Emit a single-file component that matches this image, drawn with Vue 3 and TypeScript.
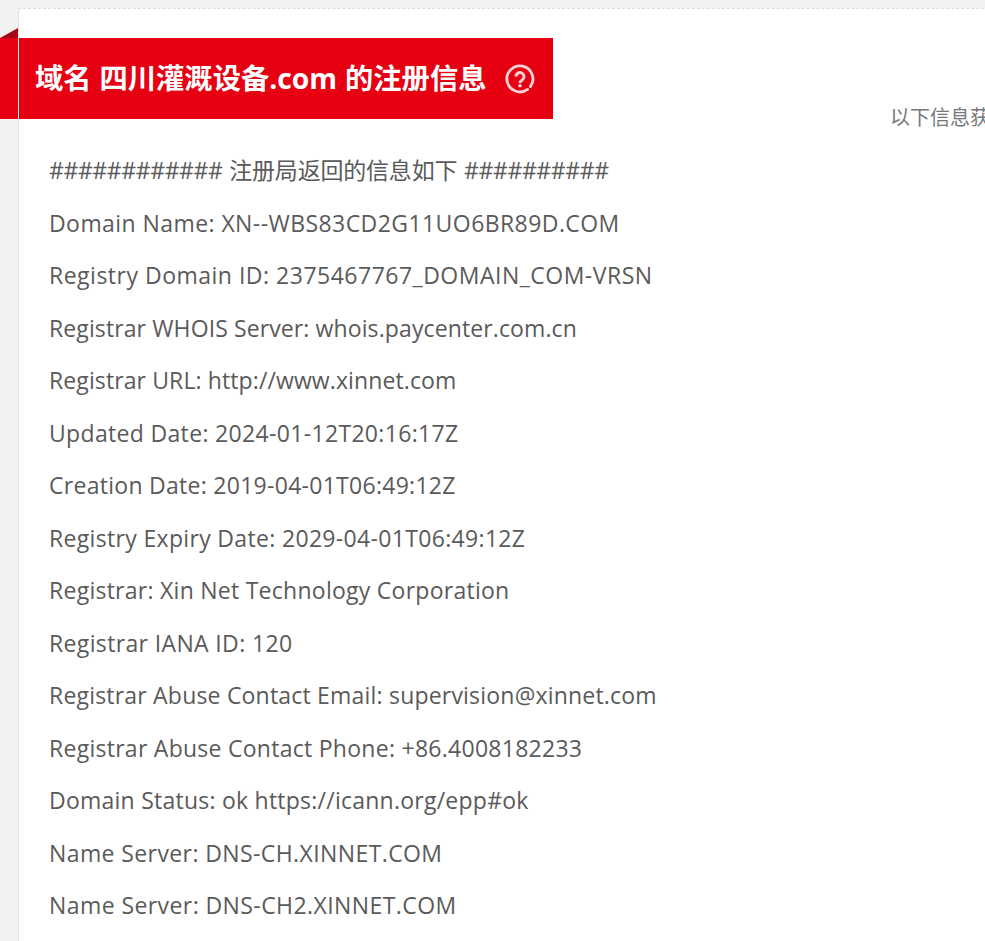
<script setup lang="ts">
interface Line {
  text: string
  track: number
}

const lines: Line[] = [
  { text: 'Domain Name: XN--WBS83CD2G11UO6BR89D.COM', track: 0.43 },
  { text: 'Registry Domain ID: 2375467767_DOMAIN_COM-VRSN', track: 0.5 },
  { text: 'Registrar WHOIS Server: whois.paycenter.com.cn', track: 0.11 },
  { text: 'Registrar URL: http://www.xinnet.com', track: 0.11 },
  { text: 'Updated Date: 2024-01-12T20:16:17Z', track: 0.33 },
  { text: 'Creation Date: 2019-04-01T06:49:12Z', track: 0.28 },
  { text: 'Registry Expiry Date: 2029-04-01T06:49:12Z', track: 0.33 },
  { text: 'Registrar: Xin Net Technology Corporation', track: 0.26 },
  { text: 'Registrar IANA ID: 120', track: 0.36 },
  { text: 'Registrar Abuse Contact Email: supervision@xinnet.com', track: 0.2 },
  { text: 'Registrar Abuse Contact Phone: +86.4008182233', track: 0.27 },
  { text: 'Domain Status: ok https://icann.org/epp#ok', track: 0.24 },
  { text: 'Name Server: DNS-CH.XINNET.COM', track: 0.4 },
  { text: 'Name Server: DNS-CH2.XINNET.COM', track: 0.42 },
]
</script>

<template>
  <div class="page">
    <section class="card">
      <div class="head-row">
        <header class="banner">
          <span class="fold"></span>
          <span class="tail"></span>
          <h1 class="title">域名 四川灌溉设备.com 的注册信息</h1>
          <svg class="help" viewBox="0 0 30 30" width="30" height="30" aria-hidden="true">
            <path d="M25.4 22.6A13 13 0 1 0 22.6 25.4" fill="none" stroke="#f6d3d6" stroke-width="2.8" stroke-linecap="round" />
            <path d="M11 12.6a4 4 0 1 1 6.2 3.3c-1.4 .9-2.2 1.4-2.2 3" fill="none" stroke="#f6d3d6" stroke-width="3" />
            <circle cx="15" cy="21.8" r="1.8" fill="#f6d3d6" />
          </svg>
        </header>
        <p class="note">以下信息获取时间</p>
      </div>
      <div class="body">
        <p class="line intro"><span class="hashes">############</span> 注册局返回的信息如下 <span class="hashes">##########</span></p>
        <p v-for="line in lines" :key="line.text" class="line" :style="{ letterSpacing: line.track + 'px' }">{{ line.text }}</p>
      </div>
    </section>
  </div>
</template>

<style>
html, body {
  margin: 0;
  height: 100%;
  overflow: hidden;
  background: #f2f2f2;
}
</style>

<style scoped>
.page {
  height: 941px;
  overflow: hidden;
  padding: 8px 0 0 18px;
  box-sizing: border-box;
  font-family: "Open Sans", "Noto Sans CJK SC", sans-serif;
}
.card {
  width: 1100px;
  height: 1100px;
  background: #fff;
  border-top: 1px dashed #dcdcdc;
  border-left: 1px solid #e4e4e4;
}
.head-row {
  position: relative;
  padding-top: 29px;
}
.banner {
  position: relative;
  display: flex;
  align-items: center;
  width: 534px;
  height: 81px;
  box-sizing: border-box;
  padding-left: 16px;
  background: #e60012;
}
.tail {
  position: absolute;
  left: -19px;
  top: 0;
  width: 18px;
  height: 81px;
  background: #e60012;
}
.fold {
  position: absolute;
  left: -19px;
  top: -10px;
  width: 0;
  height: 0;
  border-style: solid;
  border-width: 0 0 10px 18px;
  border-color: transparent transparent #a50a14 transparent;
}
.title {
  margin: 0;
  font-size: 28.3px;
  font-weight: 700;
  line-height: 81px;
  word-spacing: 0.5px;
  color: #fff;
  white-space: nowrap;
  font-family: "Open Sans", "Noto Sans CJK SC", sans-serif;
}
.help {
  margin-left: 18px;
  flex: none;
}
.note {
  position: absolute;
  left: 871px;
  top: 94px;
  margin: 0;
  font-size: 20px;
  line-height: 30px;
  color: #777;
  white-space: nowrap;
}
.body {
  padding: 25px 0 0 30px;
}
.line {
  margin: 0;
  font-size: 23px;
  line-height: 52.5px;
  color: #5a5a5a;
  white-space: nowrap;
}
.intro {
  letter-spacing: -0.2px;
  word-spacing: 1px;
}
.hashes {
  letter-spacing: -0.4px;
}
</style>
